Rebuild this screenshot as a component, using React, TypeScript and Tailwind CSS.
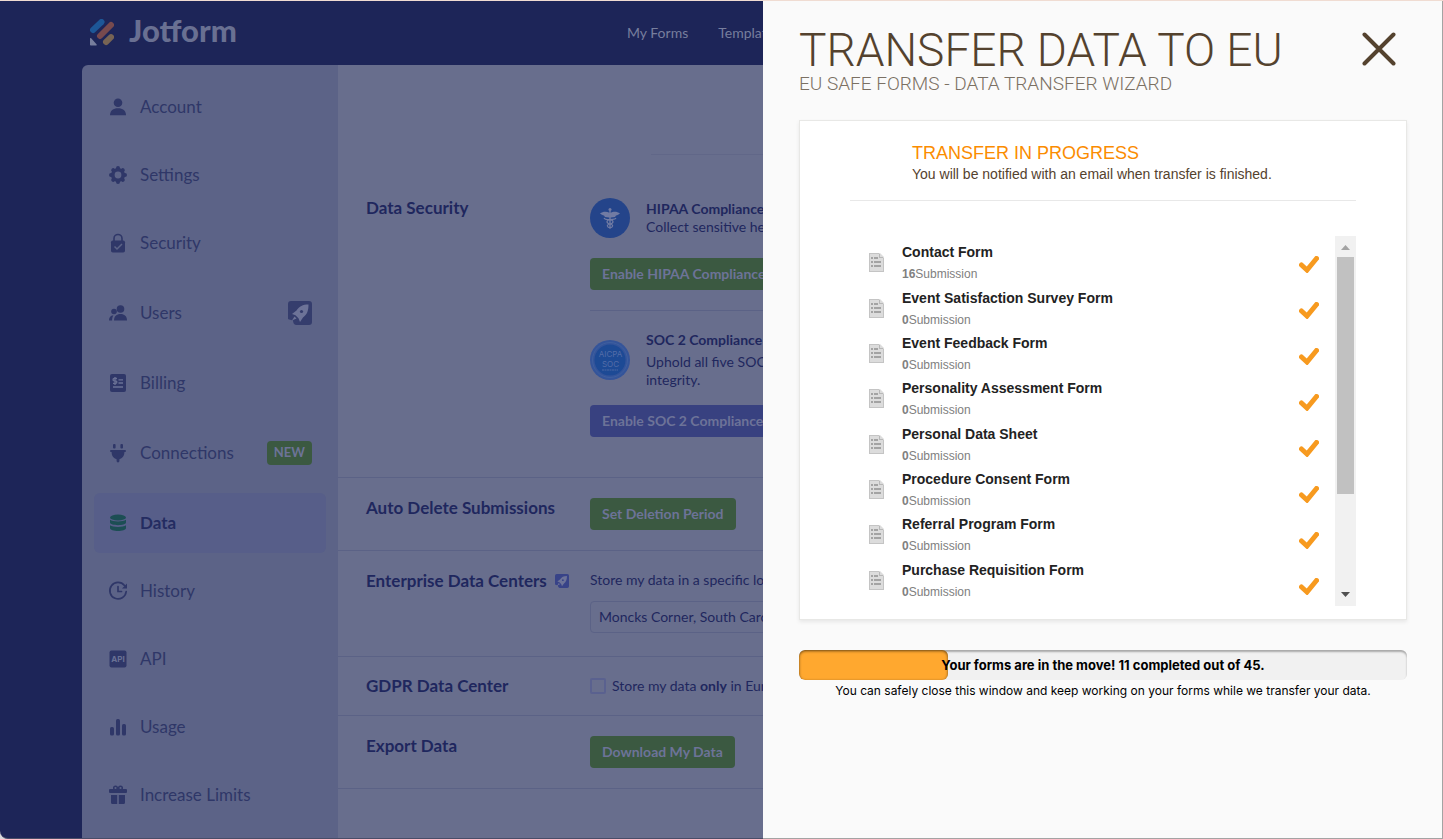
// src/App.tsx
import React from "react";

type IconProps = { className?: string };

const Svg = ({
  children,
  className = "size-5",
}: {
  children: React.ReactNode;
  className?: string;
}) => (
  <svg viewBox="0 0 20 20" className={`shrink-0 ${className}`} fill="currentColor" aria-hidden="true">
    {children}
  </svg>
);

const UserIcon = () => (
  <Svg>
    <circle cx="10" cy="5.8" r="4.3" />
    <path d="M2 18.2c0-4.6 3.2-7 8-7s8 2.4 8 7z" />
  </Svg>
);

const GearIcon = () => (
  <Svg>
    <g stroke="currentColor" strokeWidth="4" strokeLinecap="round">
      <path d="M10 3v14M3 10h14M5.2 5.2l9.6 9.6M14.8 5.2l-9.6 9.6" />
    </g>
    <circle cx="10" cy="10" r="7" />
    <circle cx="10" cy="10" r="3.4" fill="#5c6387" />
  </Svg>
);

const LockIcon = () => (
  <Svg>
    <path d="M6 8V5.5a4 4 0 0 1 8 0V8" fill="none" stroke="currentColor" strokeWidth="1.6" />
    <rect x="3" y="7.5" width="14" height="12" rx="1.8" />
    <path d="m6.5 13.5 2.5 2.5 5-5" fill="none" stroke="#5c6387" strokeWidth="1.5" />
  </Svg>
);

const UsersIcon = () => (
  <Svg>
    <circle cx="12.5" cy="6" r="3.8" />
    <path d="M6 17.5c0-4.3 2.5-6.5 6.5-6.5s6.5 2.2 6.5 6.5z" />
    <circle cx="6" cy="8.5" r="2.8" />
    <path d="M1 17.5c0-2.7 1.2-4.8 4.4-5.2-.9 1.5-1.3 3.2-1.3 5.2z" />
  </Svg>
);

const BillingIcon = () => (
  <Svg>
    <rect x="2" y="1" width="16" height="18" rx="2" />
    <g fill="none" stroke="#6a7195" strokeWidth="1.3">
      <path d="M9 5.5H6.3c-1.7 0-1.7 2.3 0 2.3h1.2c1.8 0 1.8 2.5 0 2.5H5M7 4v8M10.5 6.8H15M10.5 10H15M5 14h10" />
    </g>
  </Svg>
);

const PlugIcon = () => (
  <Svg>
    <rect x="5" y="1" width="2.6" height="4.5" rx="1" />
    <rect x="12.4" y="1" width="2.6" height="4.5" rx="1" />
    <path d="M3 7h14a1 1 0 0 1 0 2h-.6c0 3.8-2 6.5-5 7.2V18a1.4 1.4 0 0 1-2.8 0v-1.8c-3-.7-5-3.4-5-7.2H3a1 1 0 0 1 0-2z" />
  </Svg>
);

const DatabaseIcon = () => (
  <Svg>
    <ellipse cx="10" cy="4.5" rx="8" ry="3" />
    <path d="M2 6.8c3 2.2 13 2.2 16 0v2.7c0 3.5-16 3.5-16 0zM2 12.3c3 2.2 13 2.2 16 0V15c0 4-16 4-16 0z" />
  </Svg>
);

const HistoryIcon = () => (
  <Svg>
    <g fill="none" stroke="currentColor" strokeWidth="1.7" strokeLinecap="round">
      <path d="M16.5 4.6A8.2 8.2 0 1 0 18.2 10.5" />
      <path d="M10 5.5v5h3.5" />
    </g>
    <path d="M19 2.5v5h-5z" />
  </Svg>
);

const ApiIcon = () => (
  <Svg>
    <rect x="1.5" y="1.5" width="17" height="17" rx="2" />
    <text x="10" y="13" textAnchor="middle" fontSize="8" fontWeight="700" fontFamily="Inter, sans-serif" fill="#6a7195">
      API
    </text>
  </Svg>
);

const UsageIcon = () => (
  <Svg>
    <rect x="2" y="10" width="4" height="8.5" rx="1.6" />
    <rect x="8" y="2" width="4" height="16.5" rx="1.6" />
    <rect x="14" y="7" width="4" height="11.5" rx="1.6" />
  </Svg>
);

const GiftIcon = () => (
  <Svg>
    <g fill="none" stroke="currentColor" strokeWidth="1.5">
      <circle cx="7.5" cy="3" r="1.8" />
      <circle cx="12.5" cy="3" r="1.8" />
    </g>
    <rect x="1" y="4" width="18" height="4" rx="1" />
    <path d="M3 10h6.2v9H4.5A1.5 1.5 0 0 1 3 17.5zM10.8 10H17v7.5a1.5 1.5 0 0 1-1.5 1.5h-4.7z" />
  </Svg>
);

const RocketIcon = ({ className }: IconProps) => (
  <svg viewBox="0 0 24 24" className={`shrink-0 ${className}`} aria-hidden="true">
    <path d="M3 0h18a3 3 0 0 1 3 3v18a3 3 0 0 1-3 3H8c-2-.5-3-2-3-5-1 .5-3 0-5-1V3a3 3 0 0 1 3-3z" fill="currentColor" />
    <path
      d="M20.5 3.5c-6 0-9 1.8-12 6L4 13l3.5 1.2 3 3L12 21l3-4.5c4.2-3 5.5-7 5.5-13zM6.5 15.5 4 19.5l4.5-2z"
      fill="#6d7398"
    />
    <circle cx="13.5" cy="10.5" r="1.6" fill="currentColor" />
  </svg>
);

const JotformMark = () => (
  <svg viewBox="0 0 24 28" className="h-7 w-6" aria-hidden="true">
    <g fill="none" strokeWidth="6" strokeLinecap="round">
      <path d="M3 11 11.5 3" stroke="#1d5797" />
      <path d="M10 17 21 6" stroke="#774a4e" />
      <path d="m16 23 5-4.8" stroke="#776454" />
    </g>
    <path d="M0 19.5v6.2c0 .5.3.8.8.8H6c.8 0 1-.8.5-1.3l-5.3-6c-.4-.5-1.200-.4-1.200.3z" fill="#777e9d" />
  </svg>
);

const CaduceusIcon = () => (
  <svg viewBox="0 0 40 40" className="size-10 shrink-0" aria-hidden="true">
    <circle cx="20" cy="20" r="20" fill="#24448a" />
    <g fill="#717ba3">
      <circle cx="20" cy="11.5" r="1.5" />
      <path d="M10 15.5c3-2 6-2.5 10-.5 4-2 7-1.5 10 .5-1.5 1-2.5 1.6-4 2l-1 1.5-4 .5h-2l-4-.5-1-1.5c-1.5-.4-2.500-1-4-2z" />
      <path d="M19.3 13h1.4v17.5h-1.4z" />
    </g>
    <g fill="none" stroke="#717ba3" strokeWidth="1.2">
      <path d="M14 20c1 2 3 2 6 1.5s5 .5 6-1.5M20 22c-4 0-4 3 0 4s3 3 0 4M20 22c4 0 4 3 0 4s-3 3 0 4" />
    </g>
  </svg>
);

const SocBadge = () => (
  <svg viewBox="0 0 40 40" className="size-10 shrink-0" aria-hidden="true">
    <circle cx="20" cy="20" r="20" fill="#34549a" />
    <circle cx="20" cy="20" r="17.5" fill="none" stroke="#4062a0" strokeWidth="0.8" />
    <circle cx="20" cy="20" r="15.5" fill="#1d4a95" />
    <g fill="#546da8" fontFamily="Inter, sans-serif" fontSize="8" textAnchor="middle">
      <text x="20.5" y="17">AICPA</text>
      <text x="20.5" y="27">SOC</text>
    </g>
    <path d="M12 30h16" stroke="#4a67a4" strokeWidth="1" strokeDasharray="2 .5" />
  </svg>
);

const FormIcon = () => (
  <svg viewBox="0 0 15 19" className="h-[19px] w-[15px] shrink-0" aria-hidden="true">
    <path d="M0 0h10v5h5v14H0z" fill="#dcdcdc" />
    <path d="M10 0v5h5z" fill="#b8b8b8" />
    <path d="M11 0v4h4z" fill="#dcdcdc" />
    <path d="M0 .5h10M0 18.5h15M14.5 5v14M.5 0v19" stroke="#c4c4c4" fill="none" />
    <path d="M2 5h2M5 5h4M2 9h2M5 9h7M2 13h2M5 13h7" stroke="#a3a3a3" strokeWidth="2" />
  </svg>
);

const CheckIcon = () => (
  <svg viewBox="0 0 20 17" className="h-[17px] w-5" aria-hidden="true">
    <path d="M2.5 9 8 14l9.5-11.5" fill="none" stroke="#f79a1f" strokeWidth="5" strokeLinecap="round" />
  </svg>
);

const menu = [
  { label: "Account", icon: UserIcon },
  { label: "Settings", icon: GearIcon },
  { label: "Security", icon: LockIcon },
  { label: "Users", icon: UsersIcon, badge: "rocket" },
  { label: "Billing", icon: BillingIcon },
  { label: "Connections", icon: PlugIcon, badge: "new" },
  { label: "Data", icon: DatabaseIcon, active: true },
  { label: "History", icon: HistoryIcon },
  { label: "API", icon: ApiIcon },
  { label: "Usage", icon: UsageIcon },
  { label: "Increase Limits", icon: GiftIcon },
];

const forms = [
  { name: "Contact Form", count: 16 },
  { name: "Event Satisfaction Survey Form", count: 0 },
  { name: "Event Feedback Form", count: 0 },
  { name: "Personality Assessment Form", count: 0 },
  { name: "Personal Data Sheet", count: 0 },
  { name: "Procedure Consent Form", count: 0 },
  { name: "Referral Program Form", count: 0 },
  { name: "Purchase Requisition Form", count: 0 },
];

const completed = 11;
const total = 45;

function Sidebar() {
  return (
    <nav className="w-64 shrink-0 bg-[#5c6387] px-3 pt-3 text-[17px]">
      <ul className="flex flex-col gap-2">
        {menu.map(({ label, icon: Icon, badge, active }) => (
          <li key={label}>
            <a
              href="#"
              className={`flex items-center gap-3 rounded-md px-3.5 ${badge ? "h-16" : "h-15"} ${
                active ? "bg-[#575e89] font-bold text-[#242c61]" : "text-[#2f3768]"
              }`}
            >
              <span className={`flex ${active ? "text-[#1c4e54]" : "text-[#2f3768]"}`}>
                <Icon />
              </span>
              <span className="flex-1">{label}</span>
              {badge === "rocket" && <RocketIcon className="size-6 text-[#353d6d]" />}
              {badge === "new" && (
                <span className="flex h-6 items-center rounded bg-[#3b5941] px-[7px] text-[13px] font-bold text-[#6d7398]">
                  NEW
                </span>
              )}
            </a>
          </li>
        ))}
      </ul>
    </nav>
  );
}

function Row({
  title,
  children,
  className = "",
}: {
  title: React.ReactNode;
  children: React.ReactNode;
  className?: string;
}) {
  return (
    <section className={`flex border-b border-[#5b6286] pl-7 ${className}`}>
      <h2 className="flex w-56 shrink-0 items-center gap-2 self-start text-[17px] leading-[26px] font-bold">{title}</h2>
      <div className="min-w-max flex-1">{children}</div>
    </section>
  );
}

function ActionButton({ children, purple }: { children: React.ReactNode; purple?: boolean }) {
  return (
    <button
      type="button"
      className={`block h-8 rounded px-3 text-sm font-bold whitespace-nowrap text-[#6d7398] ${
        purple ? "bg-[#384180]" : "bg-[#3b5941]"
      }`}
    >
      {children}
    </button>
  );
}

function DataSettings() {
  return (
    <main className="min-w-0 flex-1 overflow-hidden bg-[#686e8d] text-sm text-[#1f275e]">
      <div className="mt-[89px] ml-[313px] border-t border-[#616788]" />
      <Row title="Data Security" className="pt-10 pb-10">
        <div className="flex gap-4 pt-[3px]">
          <CaduceusIcon />
          <p className="pt-0.5 leading-[18px]">
            <strong className="block font-bold">HIPAA Compliance</strong>
            Collect sensitive health information safely
          </p>
        </div>
        <div className="mt-5 mb-5">
          <ActionButton>Enable HIPAA Compliance</ActionButton>
        </div>
        <div className="flex gap-4 border-t border-[#5b6286] pt-5">
          <div className="pt-[9px]">
            <SocBadge />
          </div>
          <p className="leading-[18px]">
            <strong className="mb-1 block font-bold">SOC 2 Compliance</strong>
            Uphold all five SOC principles and data
            <br />
            integrity.
          </p>
        </div>
        <div className="mt-4">
          <ActionButton purple>Enable SOC 2 Compliance</ActionButton>
        </div>
      </Row>
      <Row title="Auto Delete Submissions" className="pt-[17px] pb-5">
        <div className="pt-[3px]">
          <ActionButton>Set Deletion Period</ActionButton>
        </div>
      </Row>
      <Row
        title={
          <>
            Enterprise Data Centers
            <RocketIcon className="size-3.5 text-[#384388]" />
          </>
        }
        className="pt-[17px] pb-[23px]"
      >
        <label htmlFor="region" className="block leading-6">
          Store my data in a specific location
        </label>
        <select
          id="region"
          className="mt-[9px] block h-8 w-72 appearance-none rounded border border-[#5b6286] bg-transparent px-2"
        >
          <option>Moncks Corner, South Carolina</option>
        </select>
      </Row>
      <Row title="GDPR Data Center" className="py-4">
        <div className="flex h-[26px] items-center gap-1.5">
          <input
            id="gdpr"
            type="checkbox"
            className="size-4 appearance-none rounded-xs border-2 border-[#5a618f]"
          />
          <label htmlFor="gdpr">
            Store my data <strong className="font-bold">only</strong> in Europe
          </label>
        </div>
      </Row>
      <Row title="Export Data" className="pt-[17px] pb-5">
        <div className="pt-[3px]">
          <ActionButton>Download My Data</ActionButton>
        </div>
      </Row>
    </main>
  );
}

function FormList() {
  return (
    <div className="flex h-[370px] overflow-hidden">
      <ul className="flex-1 pt-1.5 pl-[19px]">
        {forms.map((form) => (
          <li key={form.name} className="flex h-[45px] gap-[18px] nth-[3n+1]:h-[46px]">
            <div className="pt-[11px]">
              <FormIcon />
            </div>
            <div>
              <h4 className="text-sm leading-5 font-bold text-[#222]">{form.name}</h4>
              <p className="text-xs leading-[25px] text-[#808080]">
                <b className="font-bold">{form.count}</b>Submission
              </p>
            </div>
          </li>
        ))}
      </ul>
      <ul className="w-9 shrink-0 pt-[5px]" aria-label="Completed">
        {forms.map((form) => (
          <li key={form.name} className="flex h-[46px] items-center">
            <CheckIcon />
          </li>
        ))}
      </ul>
      <div className="flex w-[21px] shrink-0 flex-col items-center bg-[#f1f1f1]" aria-hidden="true">
        <svg viewBox="0 0 21 21" className="size-[21px]" fill="#a3a3a3">
          <path d="M6 14h9l-4.500-5z" />
        </svg>
        <div className="h-[237px] w-[17px] bg-[#c1c1c1]" />
        <svg viewBox="0 0 21 21" className="mt-auto size-[21px]" fill="#505050">
          <path d="M6 7h9l-4.500 5z" />
        </svg>
      </div>
    </div>
  );
}

function TransferPanel() {
  return (
    <aside className="w-[680px] shrink-0 border-r border-b border-[#a3a3a3] bg-[#fafafa] pt-[25px] pr-[35px] pl-9">
      <header className="flex items-start justify-between font-[Roboto,sans-serif] font-light">
        <div>
          <h1 className="text-[46px] leading-12 text-[#54422e]">TRANSFER DATA TO EU</h1>
          <h2 className="text-[19px] leading-5 text-[#7b7063]">EU SAFE FORMS - DATA TRANSFER WIZARD</h2>
        </div>
        <button type="button" aria-label="Close" className="mt-1.5 mr-[11px]">
          <svg viewBox="0 0 34 34" className="size-[34px]" stroke="#54422e" strokeWidth="4" strokeLinecap="round">
            <path d="M2.5 2.5l29 29M31.5 2.5l-29 29" />
          </svg>
        </button>
      </header>

      <section className="mt-[26px] border border-[#e8e8e6] bg-white px-[50px] pt-5 pb-[13px] font-['Liberation_Sans',Arial,sans-serif] shadow-[0_2px_4px_rgba(0,0,0,0.08)]">
        <div className="border-b border-[#e8e8e8] pb-[17px] pl-[62px]">
          <h3 className="text-lg leading-6 text-[#fb8c00]">TRANSFER IN PROGRESS</h3>
          <p className="text-sm leading-[18px] text-[#54422e]">
            You will be notified with an email when transfer is finished.
          </p>
        </div>
        <div className="pt-[35px]">
          <FormList />
        </div>
      </section>

      <div className="relative mt-[30px] h-[30px] overflow-hidden rounded-md bg-[#f1f1f1] shadow-[inset_0_2px_2px_rgba(0,0,0,0.3)]">
        <div
          className="h-full rounded-md bg-[#ffa82f] shadow-[inset_0_1px_3px_rgba(0,0,0,0.6)]"
          style={{ width: `${(completed / total) * 100}%` }}
        />
        <p className="absolute inset-0 text-center font-[Inter,sans-serif] text-[13px] leading-[30px] font-bold text-black">
          Your forms are in the move! {completed} completed out of {total}.
        </p>
      </div>
      <p className="text-center font-[Inter,sans-serif] text-xs leading-[22px] text-black">
        You can safely close this window and keep working on your forms while we transfer your data.
      </p>
    </aside>
  );
}

export default function App() {
  return (
    <div className="flex min-h-screen border-t border-[#f0dcd2] bg-[#d8d8dc] font-[Lato,sans-serif]">
      <div className="flex min-w-0 flex-1 flex-col overflow-hidden rounded-bl-lg border-b border-[#4a4d68] bg-[#1d2558]">
        <header className="flex h-16 shrink-0 items-center justify-between pl-[90px]">
          <a href="#" className="flex items-center gap-[15px]">
            <JotformMark />
            <span className="-mt-1.5 text-[31px] font-black text-[#697092]">Jotform</span>
          </a>
          <nav className="flex w-[136px] shrink-0 gap-[30px] text-sm whitespace-nowrap text-[#777e9d]">
            <a href="#">My Forms</a>
            <a href="#">Templates</a>
          </nav>
        </header>
        <div className="ml-[82px] flex flex-1 overflow-hidden rounded-tl-md">
          <Sidebar />
          <DataSettings />
        </div>
      </div>
      <TransferPanel />
    </div>
  );
}
